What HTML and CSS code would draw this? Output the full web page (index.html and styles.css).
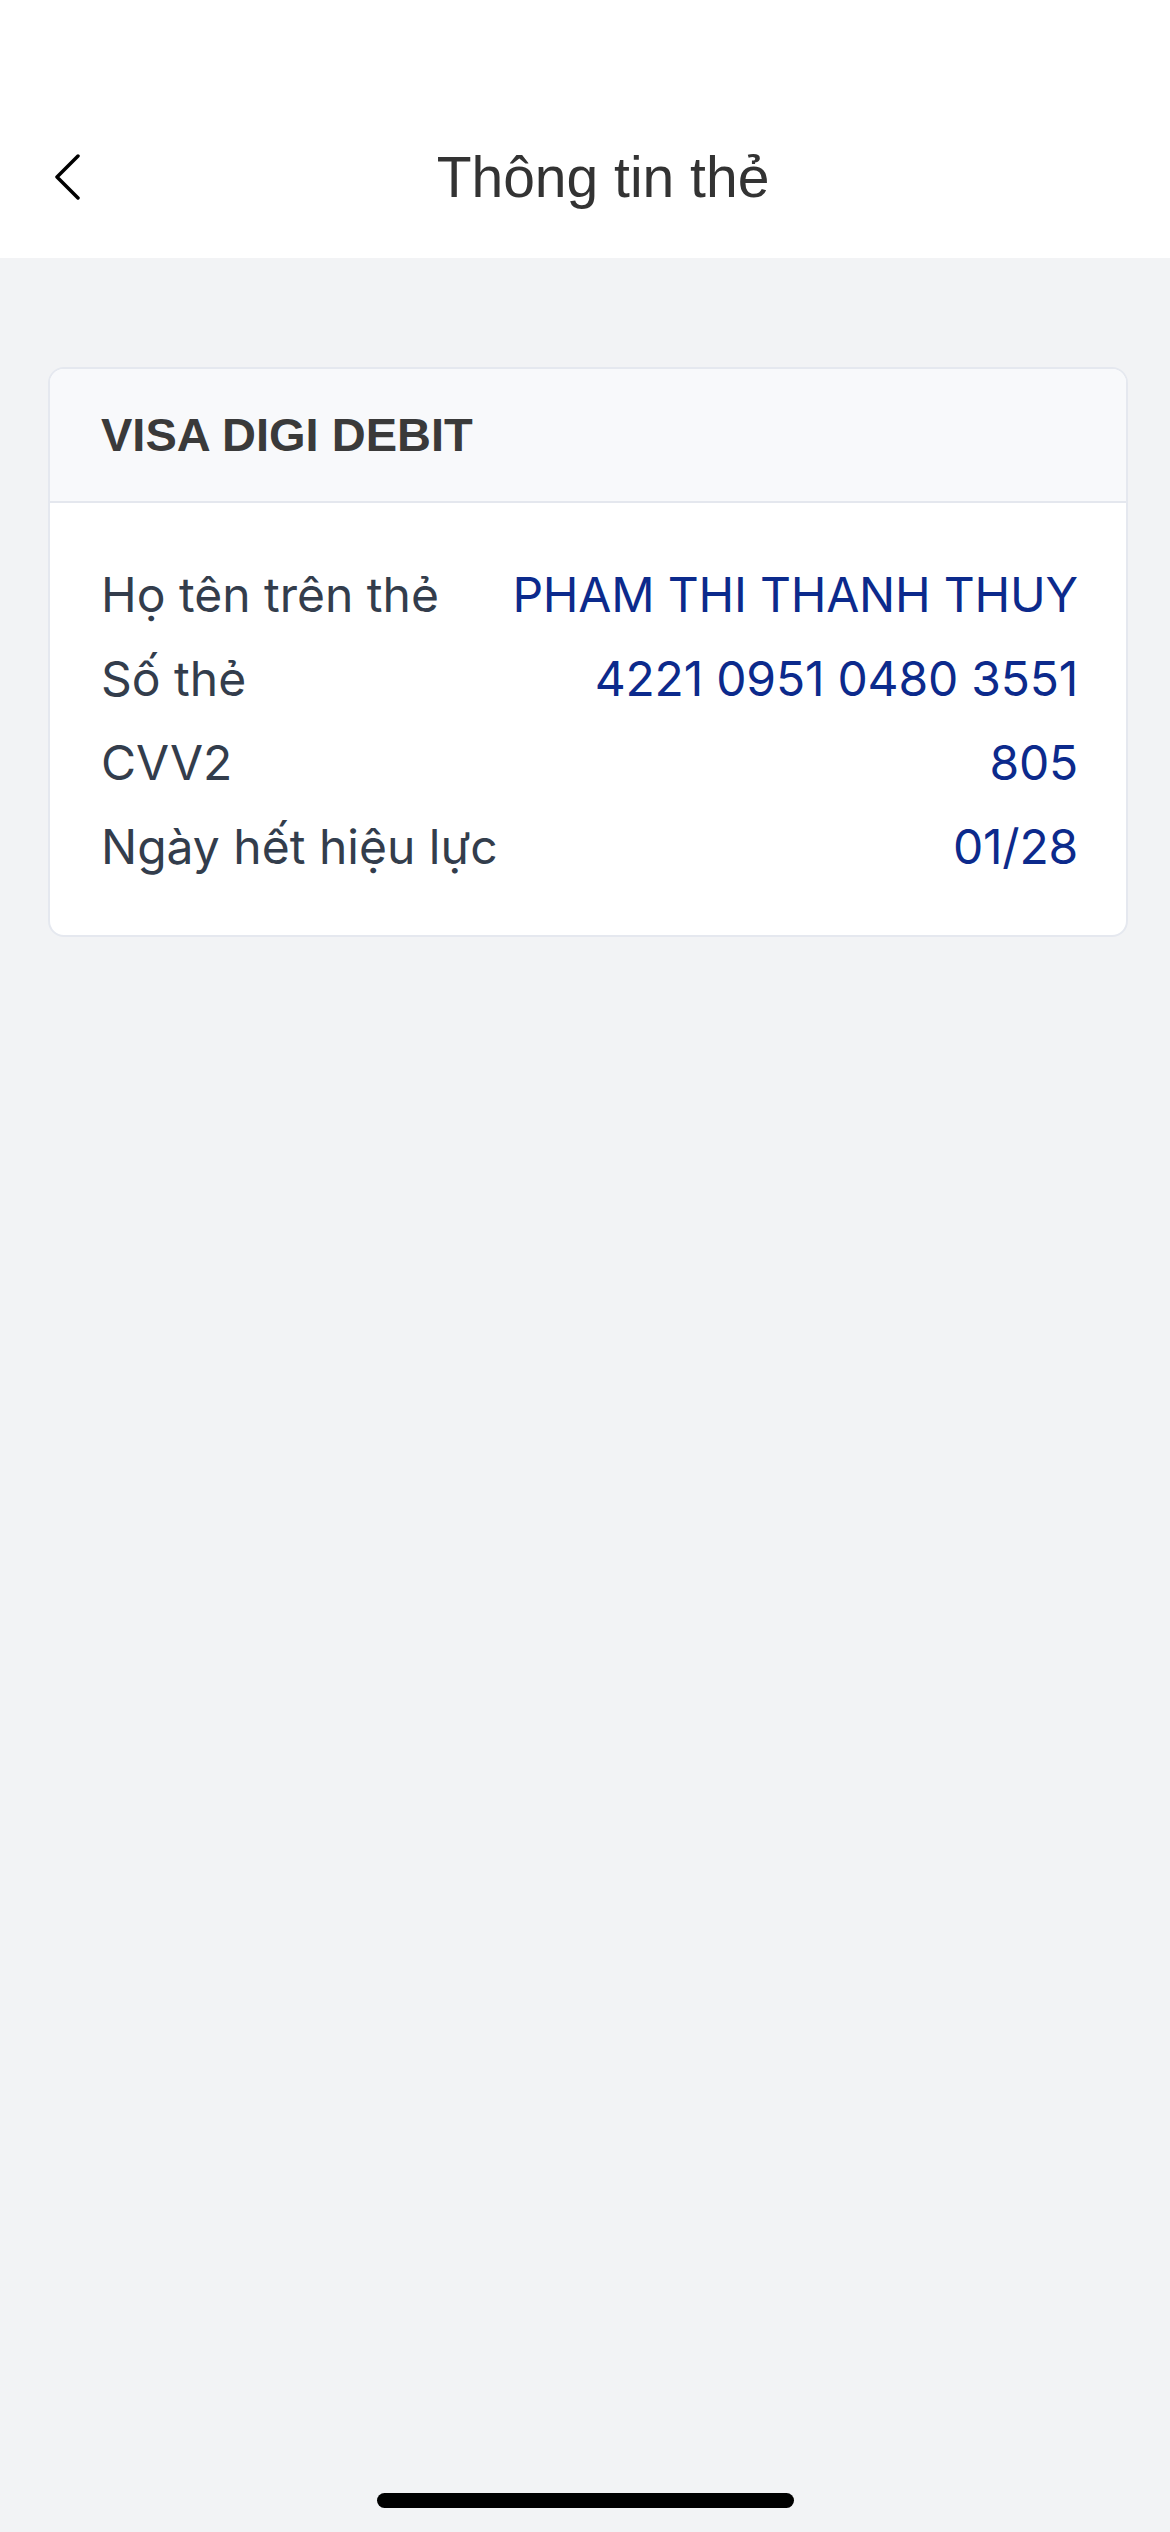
FILE: index.html
```html
<!DOCTYPE html>
<html lang="vi">
<head>
    <meta charset="UTF-8">
    <meta name="viewport" content="width=device-width, initial-scale=1.0">
    <title>Thông tin thẻ</title>
    <link rel="stylesheet" href="styles.css">
</head>
<body>
    <div class="screen">
        <header class="top-bar">
            <div class="nav-row">
                <button class="back-btn" type="button" aria-label="Quay lại">
                    <svg width="36" height="46" viewBox="0 0 36 46">
                        <polyline points="30,2 9,23 30,44" fill="none" stroke="#000" stroke-width="3.5" stroke-linecap="round" stroke-linejoin="round"/>
                    </svg>
                </button>
                <h1 class="title">Thông tin thẻ</h1>
            </div>
        </header>

        <main class="content">
            <section class="card">
                <div class="card-head">VISA DIGI DEBIT</div>
                <div class="card-body">
                    <div class="info-row">
                        <span class="label">Họ tên trên thẻ</span>
                        <span class="value">PHAM THI THANH THUY</span>
                    </div>
                    <div class="info-row">
                        <span class="label">Số thẻ</span>
                        <span class="value">4221 0951 0480 3551</span>
                    </div>
                    <div class="info-row">
                        <span class="label">CVV2</span>
                        <span class="value">805</span>
                    </div>
                    <div class="info-row">
                        <span class="label">Ngày hết hiệu lực</span>
                        <span class="value">01/28</span>
                    </div>
                </div>
            </section>
        </main>

        <div class="home-bar"></div>
    </div>
</body>
</html>
```

FILE: styles.css
```css
* {
    box-sizing: border-box;
}

body {
    margin: 0;
    font-family: Inter, "Noto Sans", sans-serif;
    background-color: #f2f3f5;
}

.screen {
    width: 1170px;
    height: 2532px;
    display: flex;
    flex-direction: column;
    background-color: #f2f3f5;
}

.top-bar {
    background-color: #fff;
    padding: 127px 0 31px;
}

.nav-row {
    height: 100px;
    display: flex;
    align-items: center;
    padding: 0 48px;
}

.back-btn {
    width: 36px;
    height: 46px;
    padding: 0;
    border: none;
    background: none;
    display: flex;
}

.title {
    flex: 1;
    margin: 0;
    text-align: center;
    font-family: "Liberation Sans", Arial, sans-serif;
    font-size: 57px;
    font-weight: 400;
    color: #333;
}

.content {
    flex: 1;
    padding: 109px 42px 0 48px;
}

.card {
    background-color: #fff;
    border: 2px solid #e5e8ef;
    border-radius: 16px;
    overflow: hidden;
}

.card-head {
    background-color: #f8f9fb;
    border-bottom: 2px solid #e4e7ee;
    padding: 38px 51px 38px;
    line-height: 56px;
    font-family: "Liberation Sans", Arial, sans-serif;
    font-size: 47px;
    font-weight: 700;
    color: #3a3a3a;
}

.card-body {
    padding: 50px 48px 46px 51px;
}

.info-row {
    display: flex;
    justify-content: space-between;
    line-height: 84px;
    font-size: 48px;
}

.label {
    color: #333d4c;
}

.value {
    color: #0c2a8c;
    text-align: right;
    letter-spacing: -0.2px;
}

.home-bar {
    width: 417px;
    height: 15px;
    margin: 0 auto 24px;
    border-radius: 8px;
    background-color: #000;
}
```
